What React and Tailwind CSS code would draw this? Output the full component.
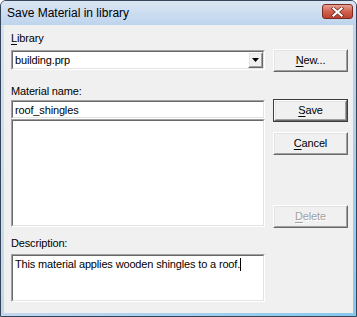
import React from 'react';

const FONT = { fontFamily: '"Liberation Sans", Arial, sans-serif' };

function Sunken({ className = '', children }) {
  return (
    <div className={`border border-t-[#a0a0a0] border-l-[#a0a0a0] border-r-white border-b-white ${className}`}>
      <div className="h-full w-full border border-t-[#696969] border-l-[#696969] border-r-[#e3e3e3] border-b-[#e3e3e3] bg-white">
        {children}
      </div>
    </div>
  );
}

function Raised({ className = '', children }) {
  return (
    <div className={`border border-t-white border-l-white border-r-[#696969] border-b-[#696969] ${className}`}>
      <div className="h-full w-full border border-t-[#e3e3e3] border-l-[#e3e3e3] border-r-[#a0a0a0] border-b-[#a0a0a0] bg-[#f0f0f0] flex items-center justify-center">
        {children}
      </div>
    </div>
  );
}

function Btn({ children, isDefault = false, disabled = false, className = '' }) {
  const label = (
    <span className={disabled ? 'text-[#a0a0a0] [text-shadow:1px_1px_0_#fff]' : 'text-black'}>{children}</span>
  );
  if (isDefault) {
    return (
      <div className={`w-[75px] h-[23px] border border-[#3c3c3c] ${className}`}>
        <Raised className="h-full w-full">{label}</Raised>
      </div>
    );
  }
  return <Raised className={`w-[75px] h-[23px] ${className}`}>{label}</Raised>;
}

const U = ({ children }) => <span className="underline underline-offset-[2px]">{children}</span>;

export default function App() {
  return (
    <div className="w-[357px] h-[317px] flex flex-col bg-gradient-to-br from-[#d6e3f2] via-[#c4d7ee] to-[#86c8ee] border border-[#34455a] rounded-t-[6px] overflow-hidden" style={FONT}>
      {/* Title bar */}
      <div className="h-[24px] flex items-start justify-between pl-[6px] pr-[3px] bg-gradient-to-b from-[#dbe6f4] to-[#bed4ed]">
        <span className="mt-[5px] text-[12px] leading-[14px] text-black">Save Material in library</span>
        <div className="mt-[3px] w-[31px] h-[15px] rounded-[3px] border border-[#7a2b22] bg-gradient-to-b from-[#e8a193] via-[#d0614f] to-[#c0412f] flex items-center justify-center">
          <svg width="13" height="10" viewBox="0 0 13 10">
            <path d="M2.5 1.5 L10.5 8.5 M10.5 1.5 L2.5 8.5" stroke="#6b2a20" strokeWidth="3.6" strokeLinecap="square" />
            <path d="M2.5 1.5 L10.5 8.5 M10.5 1.5 L2.5 8.5" stroke="#ffffff" strokeWidth="2.2" strokeLinecap="square" />
          </svg>
        </div>
      </div>

      {/* Client area */}
      <div className="flex-1 mx-[3px] mb-[3px] bg-[#f0f0f0] px-[7px] pt-[7px] text-[11px] leading-[13px] tracking-[-0.15px] text-black">
        <div className="h-[13px]"><U>L</U>ibrary</div>

        <div className="mt-[4px] flex justify-between w-[336px] h-[23px]">
          <Sunken className="mt-[1px] w-[254px] h-[20px]">
            <div className="h-full flex items-center justify-between pl-[2px]">
              <span>building.prp</span>
              <Raised className="w-[15px] h-[16px]">
                <svg width="7" height="4" viewBox="0 0 7 4"><path d="M0 0 H7 L3.5 4 Z" fill="#000" /></svg>
              </Raised>
            </div>
          </Sunken>
          <Btn className="mr-[-1px]"><U>N</U>ew...</Btn>
        </div>

        <div className="mt-[13px] h-[13px]">Material name:</div>

        <div className="mt-[1px] flex justify-between w-[336px]">
          <div className="w-[254px] flex flex-col">
            <Sunken className="mt-[1px] h-[19px]">
              <div className="pl-[2px] pt-[2px]">roof_shingles</div>
            </Sunken>
            <Sunken className="h-[108px]" />
          </div>
          <div className="w-[75px] mr-[-1px] flex flex-col">
            <Btn isDefault><U>S</U>ave</Btn>
            <Btn className="mt-[10px]"><U>C</U>ancel</Btn>
            <Btn disabled className="mt-[50px]"><U>D</U>elete</Btn>
          </div>
        </div>

        <div className="mt-[9px] h-[13px]">Description:</div>

        <Sunken className="mt-[4px] w-[254px] h-[48px]">
          <div className="pl-[2px] pt-[2px] flex items-start">
            <span>This material applies wooden shingles to a roof.</span>
            <span className="inline-block w-[1px] h-[13px] bg-black" />
          </div>
        </Sunken>
      </div>
    </div>
  );
}
